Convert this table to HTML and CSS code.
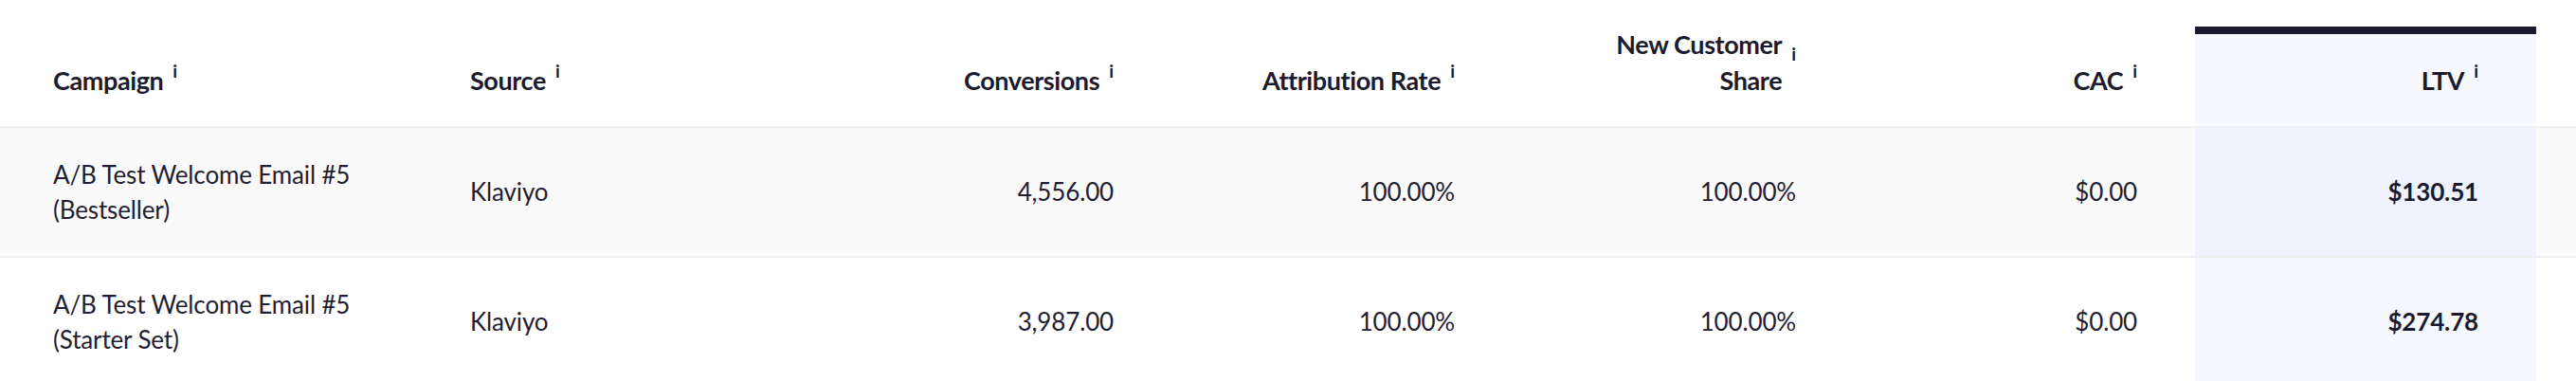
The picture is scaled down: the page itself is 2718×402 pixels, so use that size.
FILE: index.html
```html
<!DOCTYPE html>
<html lang="en">
<head>
<meta charset="utf-8">
<title>Campaign attribution</title>
<link rel="stylesheet" href="styles.css">
</head>
<body>
<div class="table">
  <div class="row head">
    <div class="cell left"><div class="hwrap"><span class="label">Campaign</span><span class="info">i</span></div></div>
    <div class="cell left"><div class="hwrap"><span class="label">Source</span><span class="info">i</span></div></div>
    <div class="cell num"><div class="hwrap"><span class="label">Conversions</span><span class="info">i</span></div></div>
    <div class="cell num"><div class="hwrap"><span class="label">Attribution Rate</span><span class="info">i</span></div></div>
    <div class="cell num"><div class="hwrap"><span class="label">New Customer<br>Share</span><span class="info">i</span></div></div>
    <div class="cell num"><div class="hwrap"><span class="label">CAC</span><span class="info">i</span></div></div>
    <div class="cell num hl hl-head"><div class="hwrap"><span class="label">LTV</span><span class="info">i</span></div></div>
    <div class="cell gutter"></div>
  </div>
  <div class="row body alt">
    <div class="cell left"><span class="text">A/B Test Welcome Email #5 (Bestseller)</span></div>
    <div class="cell left"><span class="text">Klaviyo</span></div>
    <div class="cell num"><span class="text">4,556.00</span></div>
    <div class="cell num"><span class="text">100.00%</span></div>
    <div class="cell num"><span class="text">100.00%</span></div>
    <div class="cell num"><span class="text">$0.00</span></div>
    <div class="cell num hl hl-alt"><span class="text strong">$130.51</span></div>
    <div class="cell gutter"></div>
  </div>
  <div class="row body">
    <div class="cell left"><span class="text">A/B Test Welcome Email #5 (Starter Set)</span></div>
    <div class="cell left"><span class="text">Klaviyo</span></div>
    <div class="cell num"><span class="text">3,987.00</span></div>
    <div class="cell num"><span class="text">100.00%</span></div>
    <div class="cell num"><span class="text">100.00%</span></div>
    <div class="cell num"><span class="text">$0.00</span></div>
    <div class="cell num hl"><span class="text strong">$274.78</span></div>
    <div class="cell gutter"></div>
  </div>
</div>
</body>
</html>
```
FILE: styles.css
```css
html, body {
  margin: 0;
  padding: 0;
  background: #ffffff;
}
body {
  font-family: Lato, "Noto Sans", sans-serif;
  color: #1c1b2e;
  width: 2718px;
  overflow: hidden;
}
.table {
  display: flex;
  flex-direction: column;
}
.row {
  display: grid;
  grid-template-columns: 440px 436px repeat(5, 360px) 42px;
  border-bottom: 2px solid #f0f0f0;
}
.row.head {
  height: 133px;
}
.row.body {
  height: 135px;
}
.row.alt {
  background: #fafafa;
}
.cell {
  display: flex;
  padding: 0 61px 0 56px;
}
.head .cell {
  align-items: flex-end;
  padding-bottom: 29px;
}
.body .cell {
  align-items: center;
}
.cell.num {
  justify-content: flex-end;
  text-align: right;
}
.cell.gutter {
  padding: 0;
}
.cell.left {
  padding-right: 30px;
}
.hwrap {
  display: flex;
  align-items: center;
  gap: 10px;
}
.label {
  font-size: 27px;
  line-height: 38px;
  font-weight: 700;
  letter-spacing: -0.4px;
}
.info {
  font-size: 19px;
  font-weight: 700;
  line-height: 1;
  padding-bottom: 20px;
}
.text {
  font-size: 26px;
  line-height: 37px;
  font-weight: 400;
  letter-spacing: -0.15px;
  color: #1f1e33;
}
.text.strong {
  font-weight: 700;
  color: #1c1b2e;
}
.hl {
  background: #f7f8fe;
}
.hl-alt {
  background: #f0f3fd;
}
.hl-head {
  background: linear-gradient(#ffffff 0 28px, #1c1a2e 28px 36px, #f8f9fe 36px);
}
```
